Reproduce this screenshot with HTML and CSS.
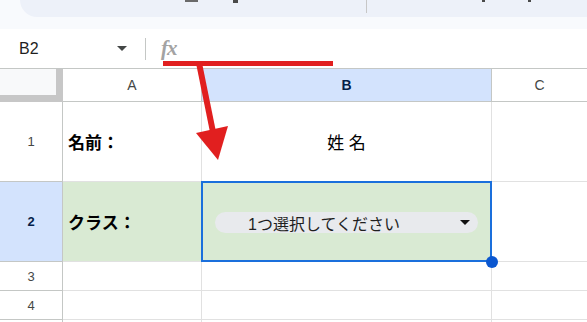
FILE: index.html
```html
<!DOCTYPE html>
<html lang="ja">
<head>
    <meta charset="UTF-8">
    <title>Sheet dropdown</title>
    <link rel="stylesheet" href="styles.css">
</head>
<body>
    <div class="toolbar-strip">
        <div class="toolbar">
            <span class="tool-mark underline"></span>
            <span class="tool-mark square"></span>
            <span class="tool-sep"></span>
            <span class="tool-mark dot first"></span>
            <span class="tool-mark dot"></span>
        </div>
    </div>

    <div class="formula-bar">
        <div class="name-box">
            <span class="name-text">B2</span>
            <span class="caret"></span>
        </div>
        <div class="fx">fx</div>
    </div>

    <div class="sheet">
        <div class="corner"></div>
        <div class="col-head">A</div>
        <div class="col-head selected">B</div>
        <div class="col-head last">C</div>

        <div class="row-head">1</div>
        <div class="cell label">名前：</div>
        <div class="cell center">姓 名</div>
        <div class="cell last"></div>

        <div class="row-head selected">2</div>
        <div class="cell label green">クラス：</div>
        <div class="cell green active">
            <div class="chip">
                <span class="chip-text">1つ選択してください</span>
                <span class="chip-caret"></span>
            </div>
            <span class="fill-handle"></span>
        </div>
        <div class="cell last"></div>

        <div class="row-head">3</div>
        <div class="cell"></div>
        <div class="cell"></div>
        <div class="cell last"></div>

        <div class="row-head">4</div>
        <div class="cell"></div>
        <div class="cell"></div>
        <div class="cell last"></div>

        <div class="row-head"></div>
        <div class="cell"></div>
        <div class="cell"></div>
        <div class="cell last"></div>
    </div>

    <!-- red annotation drawn over the sheet -->
    <svg class="annotation" width="587" height="322" viewBox="0 0 587 322">
        <rect x="163" y="61" width="170" height="5" fill="#e11f1f"/>
        <line x1="199" y1="63" x2="213" y2="132" stroke="#e11f1f" stroke-width="6"/>
        <polygon points="196,133 228,126 218,160" fill="#e11f1f"/>
    </svg>
</body>
</html>
```

FILE: styles.css
```css
* {
    box-sizing: border-box;
}
body {
    margin: 0;
    width: 587px;
    height: 322px;
    overflow: hidden;
    position: relative;
    background-color: #ffffff;
    font-family: "Liberation Sans", Arial, "Noto Sans CJK JP", sans-serif;
    color: #1f1f1f;
}

/* toolbar, cut off at the top */
.toolbar-strip {
    height: 29px;
    background-color: #f8fafd;
}
.toolbar {
    height: 17px;
    margin-left: 20px;
    background-color: #edf1f9;
    border-bottom-left-radius: 17px;
    display: flex;
    align-items: flex-start;
}
.tool-mark {
    background-color: #4a4a4a;
}
.tool-mark.underline {
    width: 13px;
    height: 2px;
    margin-left: 165px;
    background-color: #6a6a6a;
}
.tool-mark.square {
    width: 5px;
    height: 3px;
    margin-left: 35px;
}
.tool-sep {
    width: 1px;
    height: 13px;
    margin-left: 128px;
    background-color: #c7c7c7;
}
.tool-mark.dot {
    width: 3px;
    height: 2px;
    margin-left: 43px;
}
.tool-mark.dot.first {
    margin-left: 115px;
}

/* formula bar */
.formula-bar {
    height: 39px;
    display: flex;
    align-items: center;
}
.name-box {
    width: 146px;
    height: 22px;
    padding-left: 19px;
    padding-right: 18px;
    display: flex;
    align-items: center;
    justify-content: space-between;
    border-right: 1px solid #c4c7c5;
}
.name-text {
    font-size: 16px;
}
.caret {
    width: 0;
    height: 0;
    border-left: 5px solid transparent;
    border-right: 5px solid transparent;
    border-top: 5px solid #444746;
}
.fx {
    margin-left: 15px;
    font-family: "Liberation Serif", "Times New Roman", serif;
    font-style: italic;
    font-weight: bold;
    font-size: 21px;
    color: #a3a3a3;
    letter-spacing: -1px;
}

/* grid */
.sheet {
    display: grid;
    grid-template-columns: 63px 139px 290px 1fr;
    grid-template-rows: 33px 80px 80px 29px 29px 29px;
    border-top: 1px solid #c4c7c5;
}
.corner {
    background-color: #f8f9fa;
    border-right: 7px solid #c7c7c7;
    border-bottom: 7px solid #c7c7c7;
}
.col-head {
    display: flex;
    align-items: center;
    justify-content: center;
    font-size: 14px;
    color: #444746;
    border-right: 1px solid #c4c7c5;
    border-bottom: 1px solid #c4c7c5;
}
.col-head.selected {
    background-color: #d3e3fd;
    color: #041e49;
    font-weight: bold;
}
.row-head {
    display: flex;
    align-items: center;
    justify-content: center;
    font-size: 13px;
    color: #444746;
    border-right: 1px solid #c4c7c5;
    border-bottom: 1px solid #c4c7c5;
}
.row-head.selected {
    background-color: #d3e3fd;
    color: #041e49;
    font-weight: bold;
}
.cell {
    display: flex;
    align-items: center;
    font-size: 17px;
    border-right: 1px solid #e1e1e1;
    border-bottom: 1px solid #e1e1e1;
}
.col-head.last,
.cell.last {
    border-right: none;
}
.cell.label {
    padding-left: 5px;
    font-weight: bold;
    color: #000000;
}
.cell.center {
    justify-content: center;
    color: #000000;
}
.cell.green {
    background-color: #d9ead3;
}

/* selected cell with dropdown chip */
.cell.active {
    position: relative;
    padding: 0 13px;
}
.cell.active::after {
    content: "";
    position: absolute;
    top: -1px;
    left: -1px;
    right: -1px;
    bottom: -1px;
    border: 2px solid #1a6fdc;
}
.chip {
    flex: 1;
    height: 21px;
    margin-top: 2px;
    border-radius: 11px;
    background-color: #e8eaed;
    display: flex;
    align-items: center;
    justify-content: space-between;
    padding-left: 33px;
    padding-right: 8px;
}
.chip-text {
    font-size: 16px;
    color: #1f1f1f;
}
.chip-caret {
    width: 0;
    height: 0;
    border-left: 5.5px solid transparent;
    border-right: 5.5px solid transparent;
    border-top: 5px solid #111111;
}
.fill-handle {
    position: absolute;
    right: -7px;
    bottom: -7px;
    width: 12px;
    height: 12px;
    border-radius: 50%;
    background-color: #0b57d0;
    z-index: 2;
}

.annotation {
    position: absolute;
    top: 0;
    left: 0;
    pointer-events: none;
}
```
